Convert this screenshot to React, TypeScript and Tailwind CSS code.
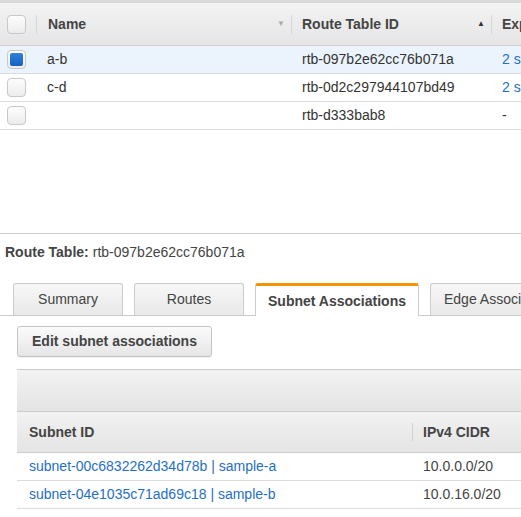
import React from "react";

const font = { fontFamily: '"Liberation Sans", Arial, sans-serif' };

function Check({ checked = false }: { checked?: boolean }) {
  return (
    <div className="w-[19px] h-[19px] rounded-[4px] border border-[#c8c8c8] bg-gradient-to-b from-[#fdfdfd] to-[#ececec] flex items-center justify-center">
      {checked && <div className="w-[13px] h-[13px] rounded-[2px] bg-gradient-to-b from-[#2f80dc] to-[#1462c2]" />}
    </div>
  );
}

export default function App() {
  const rows = [
    { name: "a-b", id: "rtb-097b2e62cc76b071a", exp: "2 s", sel: true },
    { name: "c-d", id: "rtb-0d2c297944107bd49", exp: "2 s", sel: false },
    { name: "", id: "rtb-d333bab8", exp: "-", sel: false },
  ];
  return (
    <div style={font} className="w-[521px] h-[517px] overflow-hidden bg-white text-[14px] text-[#333]">
      <div className="h-[3px] bg-[#d9d9d9]" />
      <div className="grid grid-cols-[36px_255px_200px_200px] h-[43px] bg-gradient-to-b from-[#f3f3f3] to-[#e5e5e5] border-b border-[#cfcfcf] items-center font-bold text-[#444]">
        <div className="flex justify-end pr-[10px]"><Check /></div>
        <div className="flex items-center h-[19px] border-l border-[#d6d6d6] pl-[11px] pr-[6px] justify-between">
          <span>Name</span>
          <span className="text-[8px] text-[#aaa]">▼</span>
        </div>
        <div className="flex items-center h-[19px] border-l border-[#d6d6d6] pl-[10px] pr-[6px] justify-between">
          <span>Route Table ID</span>
          <span className="text-[8px] text-[#333]">▲</span>
        </div>
        <div className="flex items-center h-[19px] border-l border-[#d6d6d6] pl-[10px]">
          <span className="whitespace-nowrap">Expected</span>
        </div>
      </div>
      {rows.map((r, i) => (
        <div
          key={i}
          className={`grid grid-cols-[36px_255px_200px_200px] h-[28px] border-b border-[#dcdcdc] items-center ${r.sel ? "bg-[#ebf3fd]" : "bg-white"}`}
        >
          <div className="flex justify-end pr-[10px]"><Check checked={r.sel} /></div>
          <div className="pl-[11px]">{r.name}</div>
          <div className="pl-[11px]">{r.id}</div>
          <div className={`pl-[11px] whitespace-nowrap ${r.exp === "-" ? "text-[#333]" : "text-[#1f6fc5]"}`}>
            {r.exp === "-" ? "-" : "2 subnets"}
          </div>
        </div>
      ))}
      <div className="h-[103px]" />
      <div className="border-t border-[#cfcfcf] h-[50px] flex items-center pl-[5px] pb-[12px] text-[14px]">
        <span className="font-bold text-[#444] mr-[4px]">Route Table:</span>
        <span className="text-[#444]">rtb-097b2e62cc76b071a</span>
      </div>
      <div className="flex items-end h-[33px] border-b border-[#cccccc] pl-[13px] gap-[11px] text-[14px]">
        <div className="w-[110px] shrink-0 h-[32px] border border-b-0 border-[#cccccc] rounded-t-[3px] bg-gradient-to-b from-[#f7f7f7] to-[#e9e9e9] flex items-center justify-center text-[#444]">Summary</div>
        <div className="w-[110px] shrink-0 h-[32px] border border-b-0 border-[#cccccc] rounded-t-[3px] bg-gradient-to-b from-[#f7f7f7] to-[#e9e9e9] flex items-center justify-center text-[#444]">Routes</div>
        <div className="w-[164px] shrink-0 h-[33px] border border-b-0 border-t-[3px] border-[#cccccc] border-t-[#f29400] rounded-t-[3px] bg-white flex items-center justify-center font-bold text-[#444] mb-[-1px]">Subnet Associations</div>
        <div className="w-[140px] shrink-0 h-[32px] border border-b-0 border-[#cccccc] rounded-t-[3px] bg-gradient-to-b from-[#f7f7f7] to-[#e9e9e9] flex items-center pl-[13px] text-[#444] whitespace-nowrap">Edge Associations</div>
      </div>
      <div className="pl-[17px] pt-[10px]">
        <div className="w-[195px] h-[31px] border border-[#c4c4c4] rounded-[3px] bg-gradient-to-b from-[#fbfbfb] to-[#e6e6e6] flex items-center justify-center font-bold text-[#444] shadow-[0_1px_0_rgba(0,0,0,0.05)]">
          Edit subnet associations
        </div>
      </div>
      <div className="ml-[17px] mt-[12px]">
        <div className="h-[42px] border-t border-[#cccccc] bg-gradient-to-b from-[#f2f2f2] to-[#e4e4e4]" />
        <div className="h-[42px] border-t border-b border-[#cccccc] bg-gradient-to-b from-[#f2f2f2] to-[#e4e4e4] grid grid-cols-[395px_200px] items-center font-bold text-[#444]">
          <div className="pl-[12px]">Subnet ID</div>
          <div className="h-[18px] border-l border-[#d0d0d0] pl-[10px] flex items-center">IPv4 CIDR</div>
        </div>
        {[
          ["subnet-00c6832262d34d78b | sample-a", "10.0.0.0/20"],
          ["subnet-04e1035c71ad69c18 | sample-b", "10.0.16.0/20"],
        ].map(([a, b], i) => (
          <div key={i} className="h-[28px] border-b border-[#dcdcdc] grid grid-cols-[395px_200px] items-center">
            <div className="pl-[12px] text-[#1f6fc5]">{a}</div>
            <div className="pl-[11px] text-[#444]">{b}</div>
          </div>
        ))}
      </div>
    </div>
  );
}
